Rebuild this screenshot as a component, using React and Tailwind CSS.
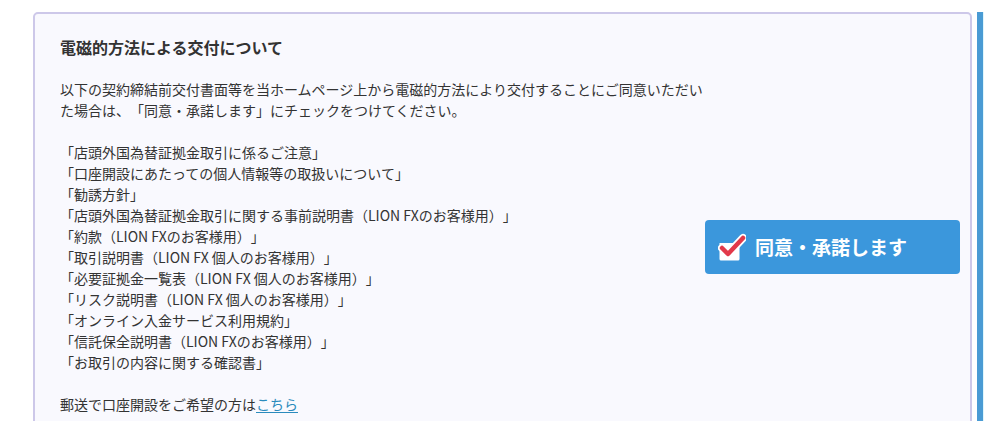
const docs = [
  '「店頭外国為替証拠金取引に係るご注意」',
  '「口座開設にあたっての個人情報等の取扱いについて」',
  '「勧誘方針」',
  '「店頭外国為替証拠金取引に関する事前説明書（LION FXのお客様用）」',
  '「約款（LION FXのお客様用）」',
  '「取引説明書（LION FX 個人のお客様用）」',
  '「必要証拠金一覧表（LION FX 個人のお客様用）」',
  '「リスク説明書（LION FX 個人のお客様用）」',
  '「オンライン入金サービス利用規約」',
  '「信託保全説明書（LION FXのお客様用）」',
  '「お取引の内容に関する確認書」',
];

function CheckIcon() {
  return (
    <svg width="28" height="28" viewBox="0 0 28 28" className="flex-shrink-0">
      <path d="M1.5 10 h15.5 l4.5 4.5 v11.5 a1.5 1.5 0 0 1 -1.5 1.5 h-17 a1.5 1.5 0 0 1 -1.5 -1.5 z" fill="#fff" />
      <path d="M4 15 L10 21 L25 5" fill="none" stroke="#fff" strokeWidth="8" strokeLinecap="round" strokeLinejoin="round" />
      <path d="M4 15 L10 21 L25 5" fill="none" stroke="#e2394a" strokeWidth="4.5" strokeLinecap="round" strokeLinejoin="round" />
    </svg>
  );
}

export default function App() {
  return (
    <div
      className="flex h-[421px] overflow-hidden bg-white pl-[33px] pt-[12px] text-[#333] [text-spacing-trim:space-all]"
      style={{ fontFamily: '"Noto Sans CJK JP", "Noto Sans", sans-serif' }}
    >
      <div className="w-[939px] h-[520px] flex-shrink-0 rounded-[5px] border-2 border-[#cdc8e9] bg-[#f9f9fe] pl-[25px] pr-[10px] pt-[21px]">
        <h2 className="text-[16px] font-bold leading-[24px]">電磁的方法による交付について</h2>
        <div className="mt-[20px] flex items-center">
          <div className="flex-1 text-[14px] leading-[21px]">
            <p>
              以下の契約締結前交付書面等を当ホームページ上から電磁的方法により交付することにご同意いただい
              <br />
              た場合は、「同意・承諾します」にチェックをつけてください。
            </p>
            <ul className="mt-[21px]">
              {docs.map((d) => (
                <li key={d}>{d}</li>
              ))}
            </ul>
            <p className="mt-[21px]">
              郵送で口座開設をご希望の方は
              <a href="#" className="text-[#2b8bbd] underline underline-offset-2">こちら</a>
            </p>
          </div>
          <button className="flex h-[54px] w-[255px] flex-shrink-0 items-center gap-[9px] rounded-[4px] bg-[#3b97dc] pl-[13px] text-[19px] font-bold text-white">
            <CheckIcon />
            <span>同意・承諾します</span>
          </button>
        </div>
      </div>
      <div className="ml-[5px] w-[6px] flex-shrink-0 bg-[#4a9bd4]" />
      <div className="w-[2px] flex-shrink-0 bg-[#dff6fc]" />
    </div>
  );
}
